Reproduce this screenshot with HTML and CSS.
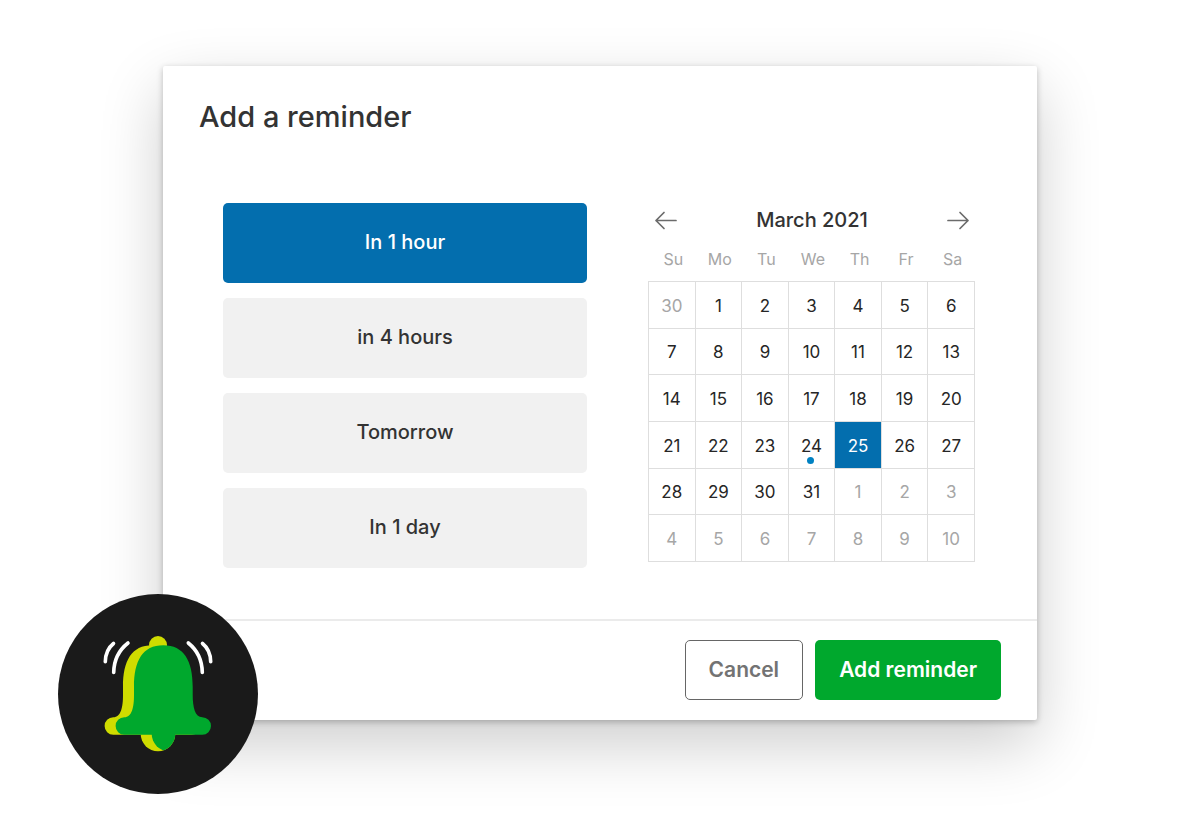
FILE: index.html
```html
<!DOCTYPE html>
<html lang="en">
<head>
  <meta charset="UTF-8">
  <meta name="viewport" content="width=device-width, initial-scale=1">
  <title>Add a reminder</title>
  <link rel="stylesheet" href="styles.css">
</head>
<body>
  <main class="dialog" role="dialog" aria-labelledby="dialog-title">
    <h1 class="dialog-title" id="dialog-title">Add a reminder</h1>

    <div class="dialog-body">
      <div class="options">
        <button type="button" class="option selected">In 1 hour</button>
        <button type="button" class="option">in 4 hours</button>
        <button type="button" class="option">Tomorrow</button>
        <button type="button" class="option">In 1 day</button>
      </div>

      <section class="calendar" aria-labelledby="month">
        <div class="calendar-head">
          <button type="button" class="arrow" aria-label="Previous month">
            <svg width="22" height="18" viewBox="0 0 22 18"><path d="M21 9.500H1M9 1.500L1 9.500l8 8"/></svg>
          </button>
          <h2 class="month" id="month">March 2021</h2>
          <button type="button" class="arrow" aria-label="Next month">
            <svg width="22" height="18" viewBox="0 0 22 18"><path d="M1 9.500H21M13 1.500l8 8-8 8"/></svg>
          </button>
        </div>
        <table class="days">
          <thead>
            <tr><th>Su</th><th>Mo</th><th>Tu</th><th>We</th><th>Th</th><th>Fr</th><th>Sa</th></tr>
          </thead>
          <tbody>
            <tr>
              <td><button type="button" class="day muted">30</button></td>
              <td><button type="button" class="day">1</button></td>
              <td><button type="button" class="day">2</button></td>
              <td><button type="button" class="day">3</button></td>
              <td><button type="button" class="day">4</button></td>
              <td><button type="button" class="day">5</button></td>
              <td><button type="button" class="day">6</button></td>
            </tr>
            <tr>
              <td><button type="button" class="day">7</button></td>
              <td><button type="button" class="day">8</button></td>
              <td><button type="button" class="day">9</button></td>
              <td><button type="button" class="day">10</button></td>
              <td><button type="button" class="day">11</button></td>
              <td><button type="button" class="day">12</button></td>
              <td><button type="button" class="day">13</button></td>
            </tr>
            <tr>
              <td><button type="button" class="day">14</button></td>
              <td><button type="button" class="day">15</button></td>
              <td><button type="button" class="day">16</button></td>
              <td><button type="button" class="day">17</button></td>
              <td><button type="button" class="day">18</button></td>
              <td><button type="button" class="day">19</button></td>
              <td><button type="button" class="day">20</button></td>
            </tr>
            <tr>
              <td><button type="button" class="day">21</button></td>
              <td><button type="button" class="day">22</button></td>
              <td><button type="button" class="day">23</button></td>
              <td><button type="button" class="day today">24</button></td>
              <td><button type="button" class="day selected">25</button></td>
              <td><button type="button" class="day">26</button></td>
              <td><button type="button" class="day">27</button></td>
            </tr>
            <tr>
              <td><button type="button" class="day">28</button></td>
              <td><button type="button" class="day">29</button></td>
              <td><button type="button" class="day">30</button></td>
              <td><button type="button" class="day">31</button></td>
              <td><button type="button" class="day muted">1</button></td>
              <td><button type="button" class="day muted">2</button></td>
              <td><button type="button" class="day muted">3</button></td>
            </tr>
            <tr>
              <td><button type="button" class="day muted">4</button></td>
              <td><button type="button" class="day muted">5</button></td>
              <td><button type="button" class="day muted">6</button></td>
              <td><button type="button" class="day muted">7</button></td>
              <td><button type="button" class="day muted">8</button></td>
              <td><button type="button" class="day muted">9</button></td>
              <td><button type="button" class="day muted">10</button></td>
            </tr>
          </tbody>
        </table>
      </section>
    </div>

    <footer class="dialog-footer">
      <button type="button" class="btn btn-cancel">Cancel</button>
      <button type="button" class="btn btn-add">Add reminder</button>
    </footer>

    <svg class="bell" viewBox="0 0 200 200" aria-hidden="true">
      <defs>
        <path id="bell-body" d="M105.3 51.3C84.500 51.300 76 67 76 92.700V101C76 113 74 123.300 66.300 123.300A8.700 8.700 0 0 0 66.300 140.700H144.300A8.700 8.700 0 0 0 144.300 123.300C137 123.300 134.700 113 134.700 101V92.700C134.700 67 126 51.300 105.300 51.300Z"/>
        <clipPath id="clapper"><path d="M82.700 140H117.300A17.300 17.300 0 0 1 82.700 140Z"/></clipPath>
      </defs>
      <circle cx="100" cy="100" r="100" fill="#1a1a1a"/>
      <g fill="#cfdc00">
        <circle cx="100" cy="51" r="9"/>
        <use href="#bell-body" x="-11"/>
        <path d="M82.700 140H117.300A17.300 17.300 0 0 1 82.700 140Z"/>
      </g>
      <g fill="#00a82d">
        <use href="#bell-body"/>
        <circle cx="111" cy="140" r="17.300" clip-path="url(#clapper)"/>
      </g>
      <g fill="none" stroke="#fff" stroke-width="3.600" stroke-linecap="round">
        <path d="M55.500 49.500Q47.500 56 47.300 67.700"/>
        <path d="M70 49Q56 60 55.700 78.500"/>
        <path d="M130.300 49Q144 60 144.300 78.500"/>
        <path d="M144.500 49.500Q152.500 56 152.700 67.700"/>
      </g>
    </svg>
  </main>
</body>
</html>
```
FILE: styles.css
```css
body {
  font-family: Inter, "Liberation Sans", sans-serif;
  margin: 0;
  padding: 66px 24px 97px;
  background-color: #fff;
  color: #333;
}

button {
  font-family: inherit;
  margin: 0;
  cursor: pointer;
}

.dialog {
  position: relative;
  max-width: 874px;
  margin: 0 auto;
  background-color: #fff;
  border-radius: 2px;
  box-shadow: 0 2px 6px rgba(0, 0, 0, 0.24), 0 24px 64px rgba(0, 0, 0, 0.2);
}

.dialog-title {
  margin: 0;
  padding: 36px 36px 71px;
  font-size: 29px;
  line-height: 30px;
  font-weight: 500;
}

.dialog-body {
  display: grid;
  grid-template-columns: 364fr 327fr;
  gap: 61px;
  padding: 0 62px 51px 60px;
}

.options {
  display: flex;
  flex-direction: column;
  gap: 15px;
}

.option {
  height: 80px;
  padding: 0 16px 2px;
  border: none;
  border-radius: 5px;
  background-color: #f1f1f1;
  color: #333;
  font-size: 20px;
  font-weight: 500;
}

.option.selected {
  background-color: #036eae;
  color: #fff;
}

/* calendar */

.calendar-head {
  display: flex;
  justify-content: space-between;
  align-items: center;
  height: 34px;
  padding: 0 6px 0 7px;
}

.month {
  margin: 0;
  font-size: 20px;
  font-weight: 500;
}

.arrow {
  display: flex;
  padding: 0;
  border: none;
  background: none;
}

.arrow svg {
  overflow: visible;
}

.arrow path {
  fill: none;
  stroke: #6b6b6b;
  stroke-width: 1.7;
  stroke-linecap: round;
  stroke-linejoin: round;
}

.days {
  width: 100%;
  height: 325px;
  table-layout: fixed;
  border-collapse: collapse;
}

.days th {
  height: 44px;
  padding: 0 0 0 3px;
  color: #a6a6a6;
  font-size: 16px;
  font-weight: 400;
}

.days td {
  height: 45px;
  padding: 0;
  border: 1px solid #dedede;
}

.day {
  position: relative;
  display: block;
  width: 100%;
  height: 100%;
  padding: 2px 0 0;
  border: none;
  background: none;
  color: #262626;
  font-size: 17px;
}

.day.muted {
  color: #a6a6a6;
}

.day.selected {
  background-color: #036eae;
  color: #fff;
}

.day.today::after {
  content: "";
  position: absolute;
  left: 50%;
  bottom: 4px;
  width: 7px;
  height: 7px;
  margin-left: -4px;
  border-radius: 50%;
  background-color: #0081c2;
}

/* footer */

.dialog-footer {
  display: flex;
  justify-content: flex-end;
  gap: 12px;
  padding: 19px 36px 20px;
  border-top: 2px solid #ebebeb;
}

.btn {
  height: 60px;
  padding: 0 24px 2px;
  border: none;
  border-radius: 5px;
  font-size: 21px;
  font-weight: 600;
}

.btn-cancel {
  padding: 0 23px 2px;
  border: 1px solid #666;
  background-color: #fff;
  color: #737373;
}

.btn-add {
  background-color: #00a82d;
  color: #fff;
}

.bell {
  position: absolute;
  left: -105px;
  bottom: -74px;
  width: 200px;
  height: 200px;
}
```
